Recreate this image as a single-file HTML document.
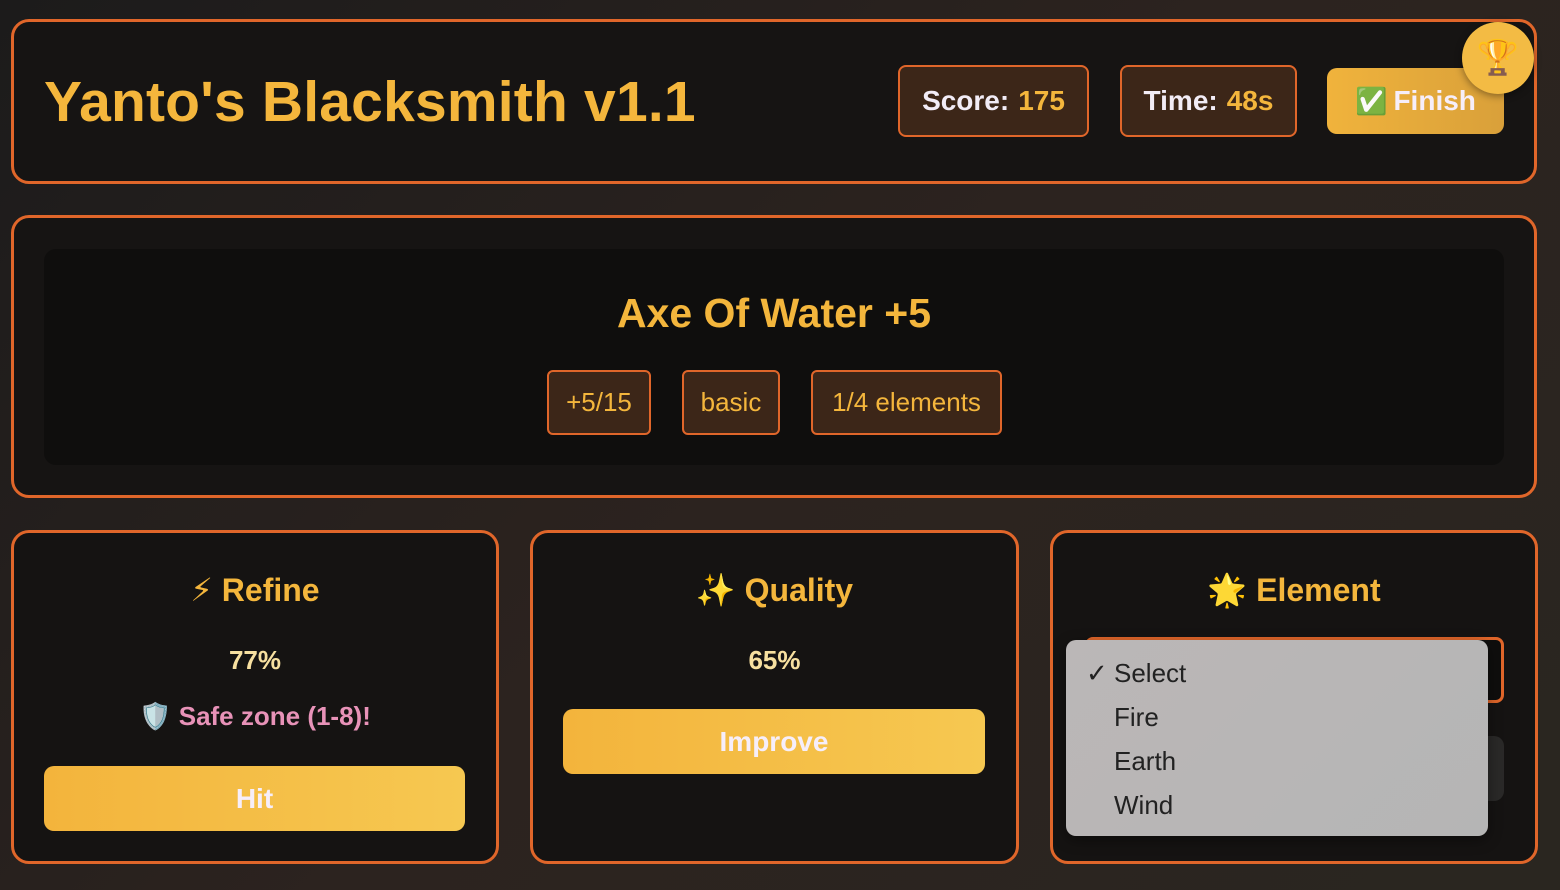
<!DOCTYPE html>
<html><head><meta charset="utf-8"><style>
*{box-sizing:border-box;margin:0;padding:0}
body{width:1560px;height:890px;overflow:hidden;background:linear-gradient(135deg,#1c1b1b,#2c231f 50%,#2a2620);font-family:"Liberation Sans","DejaVu Sans",sans-serif;position:relative}
.a{position:absolute}
.panel{position:absolute;border:3px solid #e0662a;border-radius:18px;background:#151312}
.stat{position:absolute;border:2px solid #e0662a;border-radius:8px;background:#3c2618;color:#f2ecf6;font-weight:bold;font-size:28px;display:flex;align-items:center;justify-content:center}
.stat b{color:#f4b63c;margin-left:9px}
.tag{position:absolute;border:2px solid #e0662a;border-radius:6px;background:#3c2618;color:#f4b63c;font-size:26px;display:flex;align-items:center;justify-content:center;top:370px;height:65px}
.ct{position:absolute;width:100%;text-align:center;font-weight:bold}
.btn{position:absolute;border-radius:10px;background:linear-gradient(90deg,#f3b43c,#f6c851);color:#f6eefa;font-weight:bold;font-size:28px;display:flex;align-items:center;justify-content:center}
</style></head><body>
<div class="panel" style="left:11px;top:19px;width:1526px;height:165px;background:#161413"></div>
<div class="a" style="left:44px;top:69px;font-size:57px;font-weight:bold;color:#f4b63c;letter-spacing:0.2px">Yanto's Blacksmith v1.1</div>
<div class="stat" style="left:898px;top:65px;width:191px;height:72px">Score:<b>175</b></div>
<div class="stat" style="left:1120px;top:65px;width:177px;height:72px">Time:<b>48s</b></div>
<div class="btn" style="left:1327px;top:68px;width:177px;height:66px;background:linear-gradient(90deg,#f0b33c,#d9a03a)"><span style="font-size:26px;margin-right:6px">✅</span>Finish</div>
<div class="a" style="left:1462px;top:22px;width:72px;height:72px;border-radius:50%;background:#f3bb44;box-shadow:0 2px 8px rgba(0,0,0,.4);display:flex;align-items:center;justify-content:center;font-size:34px">🏆</div>

<div class="panel" style="left:11px;top:215px;width:1526px;height:283px;background:#161413"></div>
<div class="a" style="left:44px;top:249px;width:1460px;height:216px;border-radius:12px;background:#0f0e0d"></div>
<div class="ct" style="left:0;top:290px;width:1548px;font-size:41px;color:#f4b63c">Axe Of Water +5</div>
<div class="tag" style="left:547px;width:104px">+5/15</div>
<div class="tag" style="left:682px;width:98px">basic</div>
<div class="tag" style="left:811px;width:191px">1/4 elements</div>

<div class="panel" style="left:11px;top:530px;width:488px;height:334px">
<div class="ct" style="top:38px;font-size:32px;color:#f4b63c">⚡ Refine</div>
<div class="ct" style="top:112px;font-size:26px;color:#f7e0a0">77%</div>
<div class="ct" style="top:168px;font-size:26px;color:#e892b8">🛡️ Safe zone (1-8)!</div>
</div>
<div class="btn" style="left:44px;top:766px;width:421px;height:65px">Hit</div>

<div class="panel" style="left:530px;top:530px;width:489px;height:334px">
<div class="ct" style="top:38px;font-size:32px;color:#f4b63c">✨ Quality</div>
<div class="ct" style="top:112px;font-size:26px;color:#f7e0a0">65%</div>
</div>
<div class="btn" style="left:563px;top:709px;width:422px;height:65px">Improve</div>

<div class="panel" style="left:1050px;top:530px;width:488px;height:334px">
<div class="ct" style="top:38px;font-size:32px;color:#f4b63c">🌟 Element</div>
</div>
<div class="a" style="left:1085px;top:637px;width:419px;height:66px;border:3px solid #e0662a;border-radius:8px;background:#0f0e0d"></div>
<div class="a" style="left:1085px;top:736px;width:419px;height:65px;border-radius:10px;background:#2a2928"></div>
<div class="a" style="left:1066px;top:640px;width:422px;height:196px;border-radius:10px;background:linear-gradient(135deg,#bbb7b7,#b5b5b5);box-shadow:0 4px 14px rgba(0,0,0,.4);font-size:26px;color:#222">
<div class="a" style="left:20px;top:18px;font-weight:bold">✓</div>
<div class="a" style="left:48px;top:18px">Select</div>
<div class="a" style="left:48px;top:62px">Fire</div>
<div class="a" style="left:48px;top:106px">Earth</div>
<div class="a" style="left:48px;top:150px">Wind</div>
</div>
</body></html>
